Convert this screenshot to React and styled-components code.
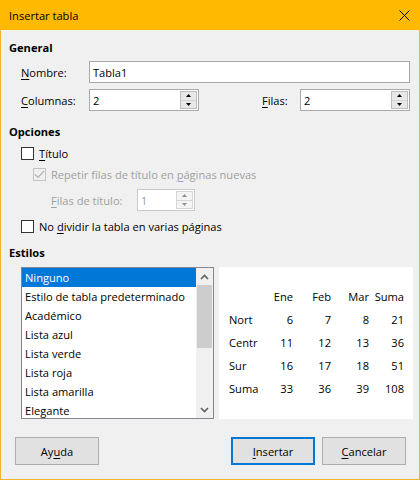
import React from 'react';
import styled, { createGlobalStyle } from 'styled-components';

const Global = createGlobalStyle`
  html, body { margin: 0; padding: 0; background: #f0f0f0; }
  body { font-family: "Open Sans", "Noto Sans", sans-serif; font-size: 11.1px; color: #000; }
  * { box-sizing: border-box; }
`;

const Window = styled.div`
  width: 420px;
  height: 480px;
  border: 1px solid #f4b42a;
  border-top: none;
  background: #f0f0f0;
  display: flex;
  flex-direction: column;
`;

const TitleBar = styled.div`
  height: 30px;
  margin: 0 -1px;
  background: #ffb900;
  display: flex;
  align-items: center;
  justify-content: space-between;
  padding: 0 10px 0 9px;
  font-size: 11.1px;
`;

const Body = styled.div`
  flex: 1;
  display: flex;
  flex-direction: column;
  padding: 0 9px 0 8px;
`;

const Heading = styled.div`
  font-weight: bold;
  height: 16px;
  line-height: 16px;
  margin-top: ${p => p.$top}px;
`;

const FieldRow = styled.div`
  display: flex;
  align-items: center;
  height: 22px;
  margin-top: ${p => p.$top}px;
  padding-left: ${p => p.$indent}px;
`;

const Label = styled.div`
  width: ${p => p.$w}px;
  flex: none;
  color: ${p => (p.$disabled ? '#a0a0a0' : '#000')};
`;

const U = styled.span`
  text-decoration: underline;
  text-underline-offset: 2px;
  text-decoration-thickness: 1px;
`;

const TextBox = styled.div`
  flex: ${p => (p.$w ? 'none' : '1')};
  width: ${p => (p.$w ? `${p.$w}px` : 'auto')};
  height: 22px;
  border: 1px solid ${p => (p.$disabled ? '#cccccc' : '#a9a9a9')};
  background: #fff;
  display: flex;
  align-items: stretch;
  padding-left: 3px;
  color: ${p => (p.$disabled ? '#a0a0a0' : '#000')};
`;

const BoxText = styled.div`
  flex: 1;
  display: flex;
  align-items: center;
`;

const SpinCol = styled.div`
  width: 17px;
  margin: 1px;
  display: flex;
  flex-direction: column;
  border: 1px solid ${p => (p.$disabled ? '#d6d6d6' : '#bdbdbd')};
  background: ${p => (p.$disabled ? '#f4f4f4' : '#e8e8e8')};
`;

const SpinHalf = styled.div`
  flex: 1;
  display: flex;
  align-items: center;
  justify-content: center;
  & + & { border-top: 1px solid ${p => (p.$disabled ? '#d6d6d6' : '#bdbdbd')}; }
`;

const Spacer = styled.div`
  flex: 1;
`;

const CheckRow = styled.div`
  display: flex;
  align-items: center;
  height: 16px;
  margin-top: ${p => p.$top}px;
  padding-left: ${p => p.$indent}px;
  color: ${p => (p.$disabled ? '#a0a0a0' : '#000')};
`;

const Box = styled.div`
  width: 13px;
  height: 13px;
  flex: none;
  border: 1px solid ${p => (p.$disabled ? '#c4c4c4' : '#333')};
  background: ${p => (p.$disabled ? '#f0f0f0' : '#fff')};
  margin-right: 5px;
  display: flex;
  align-items: center;
  justify-content: center;
`;

const StylesRow = styled.div`
  display: flex;
  margin-top: 6px;
  padding-left: 12px;
  gap: 5px;
  height: 152px;
`;

const ListBox = styled.div`
  width: 193px;
  flex: none;
  border: 1px solid #828790;
  background: #fff;
  display: flex;
  overflow: hidden;
`;

const Items = styled.div`
  flex: 1;
  overflow: hidden;
`;

const Item = styled.div`
  height: 19px;
  line-height: 19px;
  padding-left: 3px;
  white-space: nowrap;
  background: ${p => (p.$sel ? '#0078d7' : 'transparent')};
  color: ${p => (p.$sel ? '#fff' : '#000')};
`;

const ScrollBar = styled.div`
  width: 17px;
  flex: none;
  background: #f0f0f0;
  display: flex;
  flex-direction: column;
`;

const ScrollBtn = styled.div`
  height: 17px;
  display: flex;
  align-items: center;
  justify-content: center;
  flex: none;
`;

const Track = styled.div`
  flex: 1;
  display: flex;
  flex-direction: column;
`;

const Thumb = styled.div`
  height: 63px;
  margin: 0 1px;
  background: #cdcdcd;
`;

const Preview = styled.div`
  width: 194px;
  flex: none;
  background: #fff;
  padding: 18px 0 0 10px;
`;

const Grid = styled.div`
  display: grid;
  grid-template-columns: 38px 26px 38px 38px 35px;
  grid-auto-rows: 23px;
  align-items: center;
`;

const Cell = styled.div`
  text-align: ${p => (p.$left ? 'left' : 'right')};
  white-space: nowrap;
`;

const ButtonRow = styled.div`
  display: flex;
  margin-top: 18px;
  padding: 0 4px 0 6px;
  gap: 7px;
`;

const Button = styled.div`
  width: 84px;
  height: 28px;
  background: #e1e1e1;
  border: ${p => (p.$default ? '2px solid #0078d7' : '1px solid #adadad')};
  display: flex;
  align-items: center;
  justify-content: center;
  margin-left: ${p => (p.$push ? 'auto' : '0')};
`;

const Arrow = ({ up, color = '#000' }) => (
  <svg width="5" height="3" viewBox="0 0 5 3">
    <polygon points={up ? '0,3 5,3 2.5,0' : '0,0 5,0 2.5,3'} fill={color} />
  </svg>
);

const Chevron = ({ up }) => (
  <svg width="9" height="6" viewBox="0 0 9 6">
    <polyline
      points={up ? '1,5 4.5,1.5 8,5' : '1,1 4.5,4.5 8,1'}
      fill="none"
      stroke="#606060"
      strokeWidth="1.6"
    />
  </svg>
);

const Spin = ({ value, w, disabled }) => (
  <TextBox $w={w} $disabled={disabled}>
    <BoxText>{value}</BoxText>
    <SpinCol $disabled={disabled}>
      <SpinHalf $disabled={disabled}><Arrow up color={disabled ? '#909090' : '#000'} /></SpinHalf>
      <SpinHalf $disabled={disabled}><Arrow color={disabled ? '#909090' : '#000'} /></SpinHalf>
    </SpinCol>
  </TextBox>
);

const Check = ({ checked, disabled }) => (
  <Box $disabled={disabled}>
    {checked && (
      <svg width="11" height="9" viewBox="0 0 11 9">
        <polyline points="1,4.5 4,7.5 10,1" fill="none" stroke={disabled ? '#b0b0b0' : '#000'} strokeWidth="1.2" />
      </svg>
    )}
  </Box>
);

const items = [
  'Ninguno',
  'Estilo de tabla predeterminado',
  'Académico',
  'Lista azul',
  'Lista verde',
  'Lista roja',
  'Lista amarilla',
  'Elegante',
];

const table = [
  ['', 'Ene', 'Feb', 'Mar', 'Suma'],
  ['Nort', '6', '7', '8', '21'],
  ['Centr', '11', '12', '13', '36'],
  ['Sur', '16', '17', '18', '51'],
  ['Suma', '33', '36', '39', '108'],
];

export default function App() {
  return (
    <>
      <Global />
      <Window>
        <TitleBar>
          <span>Insertar tabla</span>
          <svg width="11" height="11" viewBox="0 0 11 11">
            <path d="M0.5 0.5 L10.5 10.5 M10.5 0.5 L0.5 10.5" stroke="#000" strokeWidth="1" />
          </svg>
        </TitleBar>
        <Body>
          <Heading $top={10}>General</Heading>
          <FieldRow $top={5} $indent={12}>
            <Label $w={68}><U>N</U>ombre:</Label>
            <TextBox><BoxText>Tabla1</BoxText></TextBox>
          </FieldRow>
          <FieldRow $top={6} $indent={12}>
            <Label $w={68}><U>C</U>olumnas:</Label>
            <Spin value="2" w={110} />
            <Spacer />
            <Label $w={38}><U>F</U>ilas:</Label>
            <Spin value="2" w={110} />
          </FieldRow>
          <Heading $top={13}>Opciones</Heading>
          <CheckRow $top={5} $indent={12}>
            <Check />
            <span><U>T</U>ítulo</span>
          </CheckRow>
          <CheckRow $top={5} $indent={24} $disabled>
            <Check checked disabled />
            <span>Repetir filas de título en <U>p</U>áginas nuevas</span>
          </CheckRow>
          <FieldRow $top={7} $indent={42}>
            <Label $w={86} $disabled><U>F</U>ilas de título:</Label>
            <Spin value="1" w={58} disabled />
          </FieldRow>
          <CheckRow $top={7} $indent={12}>
            <Check />
            <span>No <U>d</U>ividir la tabla en varias páginas</span>
          </CheckRow>
          <Heading $top={11}>Estilos</Heading>
          <StylesRow>
            <ListBox>
              <Items>
                {items.map((t, i) => (
                  <Item key={t} $sel={i === 0}>{t}</Item>
                ))}
              </Items>
              <ScrollBar>
                <ScrollBtn><Chevron up /></ScrollBtn>
                <Track><Thumb /></Track>
                <ScrollBtn><Chevron /></ScrollBtn>
              </ScrollBar>
            </ListBox>
            <Preview>
              <Grid>
                {table.map((row, r) =>
                  row.map((c, i) => (
                    <Cell key={`${r}-${i}`} $left={i === 0}>{c}</Cell>
                  ))
                )}
              </Grid>
            </Preview>
          </StylesRow>
          <ButtonRow>
            <Button>Ay<U>u</U>da</Button>
            <Button $push $default><U>I</U>nsertar</Button>
            <Button><U>C</U>ancelar</Button>
          </ButtonRow>
        </Body>
      </Window>
    </>
  );
}
